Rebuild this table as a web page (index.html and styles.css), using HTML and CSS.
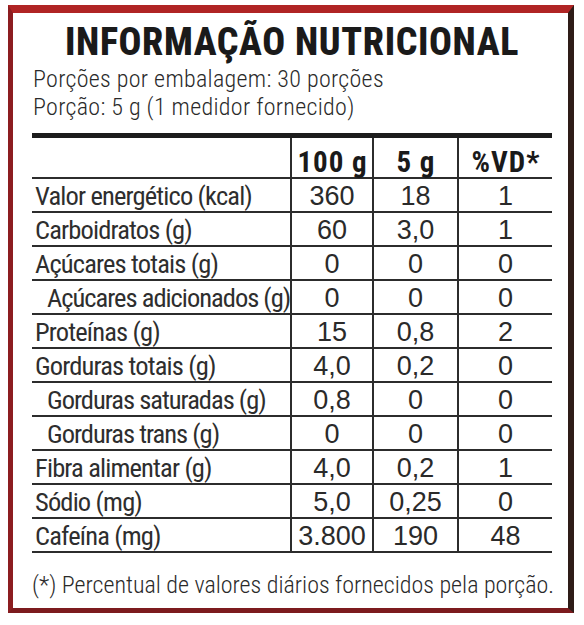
FILE: index.html
```html
<!DOCTYPE html>
<html lang="pt-BR">
<head>
<meta charset="utf-8">
<title>Informação Nutricional</title>
<link rel="stylesheet" href="styles.css">
</head>
<body>
<div class="label">
  <h1 class="title">INFORMAÇÃO NUTRICIONAL</h1>
  <p class="sub">Porções por embalagem: 30 porções</p>
  <p class="sub">Porção: 5 g (1 medidor fornecido)</p>
  <div class="table">
    <div class="row head">
      <div class="name"></div>
      <div class="val c1">100 g</div>
      <div class="val c2">5 g</div>
      <div class="val c3">%VD*</div>
    </div>
    <div class="row"><div class="name">Valor energético (kcal)</div><div class="val c1">360</div><div class="val c2">18</div><div class="val c3">1</div></div>
    <div class="row"><div class="name">Carboidratos (g)</div><div class="val c1">60</div><div class="val c2">3,0</div><div class="val c3">1</div></div>
    <div class="row"><div class="name">Açúcares totais (g)</div><div class="val c1">0</div><div class="val c2">0</div><div class="val c3">0</div></div>
    <div class="row"><div class="name sub-item">Açúcares adicionados (g)</div><div class="val c1">0</div><div class="val c2">0</div><div class="val c3">0</div></div>
    <div class="row"><div class="name">Proteínas (g)</div><div class="val c1">15</div><div class="val c2">0,8</div><div class="val c3">2</div></div>
    <div class="row"><div class="name">Gorduras totais (g)</div><div class="val c1">4,0</div><div class="val c2">0,2</div><div class="val c3">0</div></div>
    <div class="row"><div class="name sub-item">Gorduras saturadas (g)</div><div class="val c1">0,8</div><div class="val c2">0</div><div class="val c3">0</div></div>
    <div class="row"><div class="name sub-item">Gorduras trans (g)</div><div class="val c1">0</div><div class="val c2">0</div><div class="val c3">0</div></div>
    <div class="row"><div class="name">Fibra alimentar (g)</div><div class="val c1">4,0</div><div class="val c2">0,2</div><div class="val c3">1</div></div>
    <div class="row"><div class="name">Sódio (mg)</div><div class="val c1">5,0</div><div class="val c2">0,25</div><div class="val c3">0</div></div>
    <div class="row"><div class="name">Cafeína (mg)</div><div class="val c1">3.800</div><div class="val c2">190</div><div class="val c3">48</div></div>
  </div>
  <p class="note">(*) Percentual de valores diários fornecidos pela porção.</p>
</div>
</body>
</html>
```

FILE: styles.css
```css
html, body {
  margin: 0;
  padding: 0;
  background: #ffffff;
}

.label {
  box-sizing: border-box;
  width: 566px;
  height: 608px;
  margin: 5px 0 0 8px;
  background: #ffffff;
  border-style: solid;
  border-width: 8px 6px 5px 5px;
  border-color: #b02424 #2e1c18 #7c1b1e #8c1d20;
  padding: 9px 16px 0 19px;
  color: #1e1e1e;
  font-family: "Roboto Condensed", "Liberation Sans", sans-serif;
}

.title {
  margin: 0;
  font-size: 38px;
  line-height: 40px;
  font-weight: 800;
  letter-spacing: 0.6px;
  text-align: center;
  color: #1a1a1a;
}

.sub {
  margin: 0;
  padding-left: 1px;
  font-size: 24px;
  line-height: 28px;
  font-weight: 300;
  letter-spacing: 0.3px;
  color: #2a2a2a;
}

.sub:first-of-type {
  margin-top: 3px;
}

.table {
  margin-top: 12px;
  border-top: 5px solid #1c1c1c;
  width: 520px;
}

.row {
  display: flex;
  height: 32px;
  border-bottom: 2px solid #2c2c2c;
}

.row.head {
  height: 39px;
}

.name {
  width: 258px;
  box-sizing: border-box;
  padding-left: 3px;
  font-size: 26.5px;
  line-height: 34px;
  font-weight: 400;
  letter-spacing: -0.85px;
  white-space: nowrap;
  color: #2e2e2e;
}

.name.sub-item {
  padding-left: 15px;
  letter-spacing: -1px;
}

.val {
  box-sizing: border-box;
  border-left: 2px solid #2c2c2c;
  text-align: center;
  font-family: "Liberation Sans", Arial, sans-serif;
  font-size: 27px;
  line-height: 34px;
  white-space: nowrap;
  color: #2a2a2a;
}

.c1 { width: 82px; }
.c2 { width: 85px; }
.c3 { width: 95px; }

.head .val {
  font-family: "Roboto Condensed", "Liberation Sans", sans-serif;
  font-weight: 700;
  font-size: 29px;
  line-height: 40px;
  padding-top: 4px;
  letter-spacing: 1px;
  text-indent: 1px;
  color: #1a1a1a;
}

.note {
  margin: 17px 0 0 0;
  font-size: 24px;
  line-height: 30px;
  font-weight: 300;
  color: #2a2a2a;
  white-space: nowrap;
}
```
